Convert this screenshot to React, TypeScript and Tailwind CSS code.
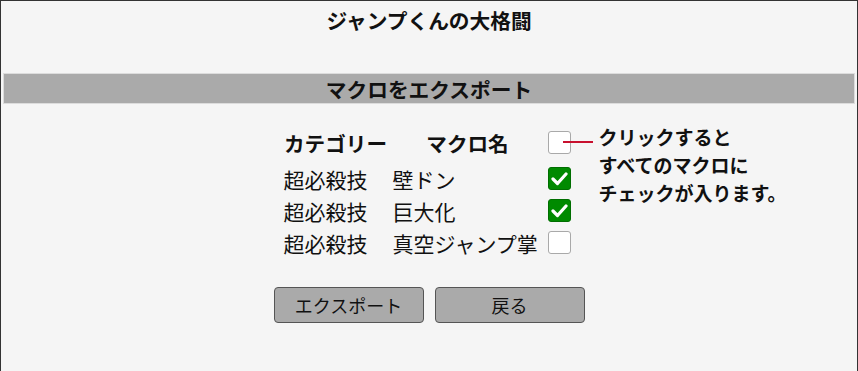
import React, { useState } from 'react';

const FONT = { fontFamily: '"Noto Sans CJK JP", "Noto Sans", sans-serif' };

type Macro = { category: string; name: string; checked: boolean };

const initialMacros: Macro[] = [
  { category: '超必殺技', name: '壁ドン', checked: true },
  { category: '超必殺技', name: '巨大化', checked: true },
  { category: '超必殺技', name: '真空ジャンプ掌', checked: false },
];

function Box({ checked, onClick }: { checked: boolean; onClick?: () => void }) {
  return (
    <button
      onClick={onClick}
      className={
        checked
          ? 'w-[23px] h-[23px] rounded-[3px] bg-[#008a00] border border-[#006e00] flex items-center justify-center'
          : 'w-[23px] h-[23px] rounded-[3px] bg-white border border-[#a9a9a9] flex items-center justify-center'
      }
    >
      {checked && (
        <svg width="17" height="15" viewBox="0 0 17 15">
          <path d="M2 8 L6.5 12.5 L15 3" fill="none" stroke="white" strokeWidth="3.2" strokeLinecap="round" strokeLinejoin="round" />
        </svg>
      )}
    </button>
  );
}

export default function App() {
  const [macros, setMacros] = useState(initialMacros);
  const allChecked = macros.every(m => m.checked);

  const toggleAll = () => {
    const next = !allChecked;
    setMacros(prev => prev.map(m => ({ ...m, checked: next })));
  };

  const toggle = (i: number) => {
    setMacros(prev => prev.map((m, j) => (j === i ? { ...m, checked: !m.checked } : m)));
  };

  return (
    <div className="w-[858px] h-[400px] bg-[#f5f5f5] border border-[#333] px-[2px] text-[#111]" style={FONT}>
      {/* Title */}
      <h1 className="text-center text-[20.7px] font-bold leading-[24px] pt-[7px] h-[72px]">
        ジャンプくんの大格闘
      </h1>

      {/* Section bar */}
      <div className="h-[31px] bg-[#aaaaaa] border border-[#dcdcdc] flex items-center justify-center">
        <h2 className="text-[20.7px] font-bold leading-[24px]">マクロをエクスポート</h2>
      </div>

      {/* Table + annotation */}
      <div className="flex justify-center pt-[21px] pr-[7px]">
        <div className="relative flex flex-col">
          <div className="flex items-center h-[34px] text-[20.6px] font-bold pt-[3px]">
            <div className="w-[110px] text-center">カテゴリー</div>
            <div className="w-[154px] text-center">マクロ名</div>
            <div className="w-[26px] flex justify-end -mt-[3px]">
              <Box checked={allChecked} onClick={toggleAll} />
            </div>
          </div>
          <div className="h-[3px]" />
          {macros.map((m, i) => (
            <div key={i} className="flex items-center h-[32px] text-[21px]">
              <div className="w-[110px] pl-[3px] pt-[3px]">{m.category}</div>
              <div className="w-[154px] pl-[2px] pt-[3px]">{m.name}</div>
              <div className="w-[26px] flex justify-end">
                <Box checked={m.checked} onClick={() => toggle(i)} />
              </div>
            </div>
          ))}

          {/* Annotation */}
          <div className="absolute left-[318px] top-[-2px] w-[200px] text-[19px] font-semibold leading-[28px]">
            <div className="absolute left-[-36px] top-[18px] w-[30px] h-[2px] bg-[#c8102e]" />
            <p>クリックすると</p>
            <p>すべてのマクロに</p>
            <p>チェックが入ります。</p>
          </div>
        </div>
      </div>

      {/* Buttons */}
      <div className="flex justify-center gap-[11px] mt-[29px]">
        <button className="w-[150px] h-[36px] bg-[#aaaaaa] border border-[#555] rounded-[4px] text-[18px]">
          エクスポート
        </button>
        <button className="w-[150px] h-[36px] bg-[#aaaaaa] border border-[#555] rounded-[4px] text-[18px]">
          戻る
        </button>
      </div>
    </div>
  );
}
